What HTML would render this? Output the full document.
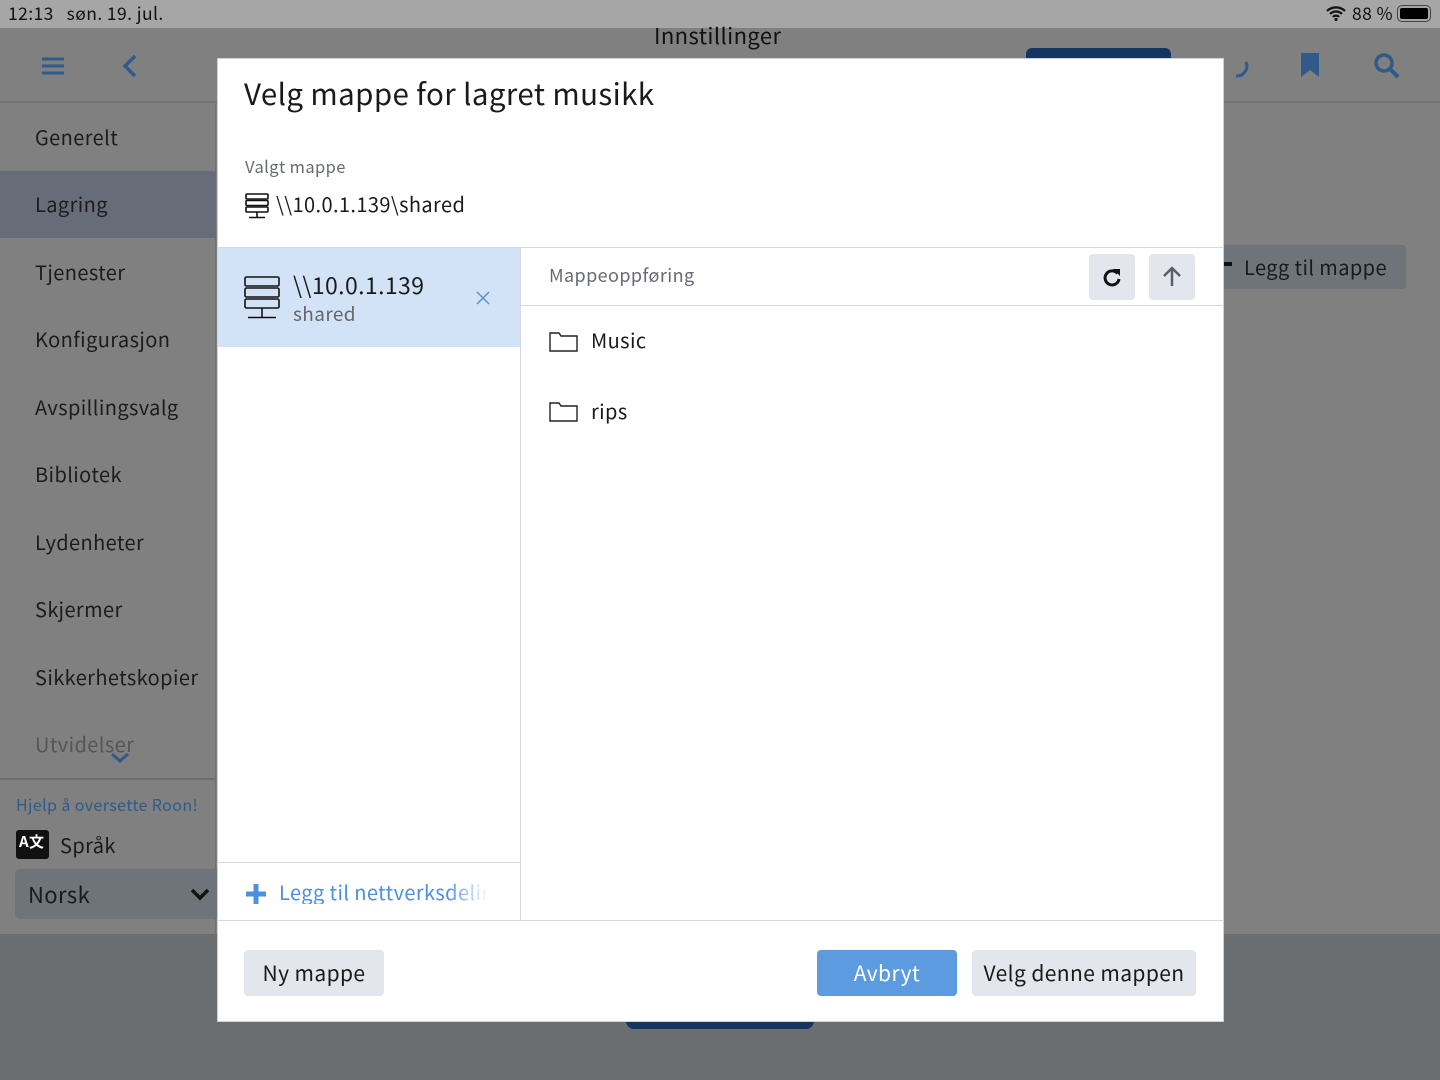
<!DOCTYPE html>
<html><head><meta charset="utf-8"><style>
*{box-sizing:border-box;margin:0;padding:0}
body{width:1440px;height:1080px;position:relative;overflow:hidden;background:#808080;font-family:"Noto Sans CJK JP","DejaVu Sans",sans-serif;color:#1a1a1a;line-height:1.22;letter-spacing:0.4px}
.abs{position:absolute}
.sb{left:0;top:0;width:1440px;height:28px;background:#a6a6a6;font-size:17.5px;color:#111}
.side{left:0;top:104px;width:216px;height:830px;background:#808080;border-right:1px solid #707070}
.item{position:absolute;left:35px;font-size:20px;color:#1c1c1c}
.modal{left:217px;top:58px;width:1007px;height:964px;background:#fff;border:1px solid #c9d3de}
.btn{position:absolute;border-radius:4px;font-size:21px;text-align:center;line-height:46px;height:46px}
</style></head><body>
<div class="abs sb"><span class="abs" style="left:8px;top:3px">12:13&nbsp;&nbsp;&nbsp;søn. 19. jul.</span>
<svg class="abs" style="left:1326px;top:6px" width="20" height="15" viewBox="0 0 20 15"><path d="M1 5a13 13 0 0 1 18 0M4 8a8.5 8.5 0 0 1 12 0M7 11a4 4 0 0 1 6 0" stroke="#111" stroke-width="2.2" fill="none"/><circle cx="10" cy="13.5" r="1.6" fill="#111"/></svg>
<span class="abs" style="left:1352px;top:3px">88 %</span>
<div class="abs" style="left:1397px;top:5px;width:34px;height:17px;border:1.5px solid #444;border-radius:5px;padding:2px"><div style="width:100%;height:100%;background:#000;border-radius:2px"></div></div></div>
<div class="abs" style="left:0;top:28px;width:1440px;height:75px;background:#808080;border-bottom:2px solid #737373"></div>
<div class="abs" style="left:654px;top:22px;font-size:22px;color:#111">Innstillinger</div>
<svg class="abs" style="left:42px;top:56px" width="22" height="20"><path d="M0 3h22M0 10h22M0 17h22" stroke="#2f5a8a" stroke-width="3"/></svg>
<svg class="abs" style="left:122px;top:54px" width="16" height="24"><path d="M13 2L3 12l10 10" stroke="#2f5a8a" stroke-width="3.5" fill="none"/></svg>
<div class="abs" style="left:1026px;top:48px;width:145px;height:12px;background:#133560;border-radius:6px 6px 0 0"></div>
<svg class="abs" style="left:1228px;top:58px" width="22" height="22"><path d="M18 4a10 10 0 0 1-10 14" stroke="#2f5a8a" stroke-width="3" fill="none"/></svg>
<svg class="abs" style="left:1301px;top:53px" width="18" height="25"><path d="M0 0h18v24l-9-7-9 7z" fill="#2f5a8a"/></svg>
<svg class="abs" style="left:1373px;top:52px" width="28" height="28"><circle cx="11" cy="11" r="8" stroke="#2f5a8a" stroke-width="3.5" fill="none"/><path d="M17 17l8 8" stroke="#2f5a8a" stroke-width="4"/></svg>
<div class="abs side">
<div class="abs" style="left:0;top:67px;width:216px;height:67px;background:#676d78"></div>
<div class="item" style="top:21px">Generelt</div>
<div class="item" style="top:88px">Lagring</div>
<div class="item" style="top:156px">Tjenester</div>
<div class="item" style="top:223px">Konfigurasjon</div>
<div class="item" style="top:291px">Avspillingsvalg</div>
<div class="item" style="top:358px">Bibliotek</div>
<div class="item" style="top:426px">Lydenheter</div>
<div class="item" style="top:493px">Skjermer</div>
<div class="item" style="top:561px">Sikkerhetskopier</div>
<div class="item" style="top:628px;color:#555">Utvidelser</div>
<svg class="abs" style="left:110px;top:648px" width="20" height="12"><path d="M2 2l8 7 8-7" stroke="#2f5a8a" stroke-width="3" fill="none"/></svg>
<div class="abs" style="left:0;top:674px;width:216px;border-top:2px solid #6e6e6e"></div>
<div class="abs" style="left:16px;top:691px;font-size:16px;color:#2f5a8a">Hjelp å oversette Roon!</div>
<div class="abs" style="left:16px;top:726px;width:33px;height:29px;background:#111;border-radius:3px;color:#fff;font-size:15px;font-weight:bold;padding-left:3px;line-height:24px">A文</div>
<div class="abs" style="left:60px;top:729px;font-size:20px">Språk</div>
<div class="abs" style="left:15px;top:765px;width:205px;height:50px;background:#6f737a;border-radius:5px;font-size:22px;line-height:50px;padding-left:13px">Norsk</div>
<svg class="abs" style="left:190px;top:784px" width="20" height="14"><path d="M2 2l8 8 8-8" stroke="#111" stroke-width="3.5" fill="none"/></svg>
</div>
<div class="abs" style="left:0;top:934px;width:1440px;height:146px;background:#6b6e71"></div>
<div class="abs" style="left:626px;top:1010px;width:188px;height:19px;background:#133560;border-radius:0 0 8px 8px"></div>
<div class="abs" style="left:1216px;top:245px;width:190px;height:44px;background:#6f737a;border-radius:4px;font-size:20px;line-height:44px;padding-left:28px">Legg til mappe</div>
<div class="abs" style="left:1222px;top:262px;width:10px;height:4px;background:#111"></div>
<div class="abs modal">
<div class="abs" style="left:26px;top:16px;font-size:29.5px;color:#1a1a1a">Velg mappe for lagret musikk</div>
<div class="abs" style="left:27px;top:97px;font-size:16.5px;color:#666b72">Valgt mappe</div>
<svg class="abs" style="left:27px;top:134px" width="24" height="26"><g stroke="#111" stroke-width="1.6" fill="none"><rect x="1" y="1" width="22" height="5" rx="1"/><rect x="1" y="7.5" width="22" height="5" rx="1"/><rect x="1" y="14" width="22" height="5" rx="1"/><path d="M12 19v5M4 24.5h16"/></g></svg>
<div class="abs" style="left:58px;top:133px;font-size:20px">\\10.0.1.139\shared</div>
<div class="abs" style="left:0;top:188px;width:1006px;border-top:1.5px solid #d5d8dc"></div>
<div class="abs" style="left:0;top:189px;width:302px;height:99px;background:#d3e3f7"></div>
<svg class="abs" style="left:26px;top:217px" width="36" height="44"><g stroke="#111" stroke-width="1.6" fill="none"><rect x="1" y="1" width="34" height="9" rx="1.5"/><rect x="1" y="12" width="34" height="9" rx="1.5"/><rect x="1" y="23" width="34" height="9" rx="1.5"/><path d="M18 32v9M4 41.5h28"/></g></svg>
<div class="abs" style="left:75px;top:211px;font-size:23px">\\10.0.1.139</div>
<div class="abs" style="left:75px;top:243px;font-size:19px;color:#666">shared</div>
<svg class="abs" style="left:258px;top:232px" width="14" height="14"><path d="M1 1l12 12M13 1L1 13" stroke="#5a8fd8" stroke-width="1.5"/></svg>
<div class="abs" style="left:302px;top:189px;height:673px;border-left:1.5px solid #d5d8dc"></div>
<div class="abs" style="left:0;top:803px;width:302px;border-top:1.5px solid #d5d8dc"></div>
<svg class="abs" style="left:27px;top:824px" width="22" height="22"><path d="M11 1v20M1 11h20" stroke="#4e8fe0" stroke-width="5"/></svg>
<div class="abs" style="left:61px;top:821px;font-size:20px;color:#4e8fe0;width:210px;white-space:nowrap;overflow:hidden;-webkit-mask-image:linear-gradient(90deg,#000 80%,transparent)">Legg til nettverksdeling</div>
<div class="abs" style="left:331px;top:206px;font-size:18px;color:#666b72">Mappeoppføring</div>
<div class="abs" style="left:871px;top:195px;width:46px;height:46px;background:#e3e6ec;border-radius:4px"></div>
<svg class="abs" style="left:883px;top:207px" width="22" height="22"><path d="M16.5 7.5A7 7 0 1 0 18 13" stroke="#111" stroke-width="3" fill="none"/><path d="M12 3h7v7z" fill="#111"/></svg>
<div class="abs" style="left:931px;top:195px;width:46px;height:46px;background:#e3e6ec;border-radius:4px"></div>
<svg class="abs" style="left:943px;top:207px" width="22" height="22"><path d="M11 20V3M3 10l8-8 8 8" stroke="#55606e" stroke-width="2.5" fill="none"/></svg>
<div class="abs" style="left:303px;top:246px;width:703px;border-top:1.5px solid #d5d8dc"></div>
<svg class="abs" style="left:331px;top:272px" width="29" height="21"><path d="M1 2h9l2 3h16v15H1z" stroke="#222" stroke-width="1.4" fill="none"/></svg>
<div class="abs" style="left:373px;top:269px;font-size:20px">Music</div>
<svg class="abs" style="left:331px;top:342px" width="29" height="21"><path d="M1 2h9l2 3h16v15H1z" stroke="#222" stroke-width="1.4" fill="none"/></svg>
<div class="abs" style="left:373px;top:340px;font-size:20px">rips</div>
<div class="abs" style="left:0;top:861px;width:1006px;border-top:1.5px solid #d5d8dc"></div>
<div class="btn" style="left:26px;top:891px;width:140px;background:#e3e6ec">Ny mappe</div>
<div class="btn" style="left:599px;top:891px;width:140px;background:#5d9be0;color:#fff">Avbryt</div>
<div class="btn" style="left:754px;top:891px;width:224px;background:#e3e6ec">Velg denne mappen</div>
</div>
</body></html>
